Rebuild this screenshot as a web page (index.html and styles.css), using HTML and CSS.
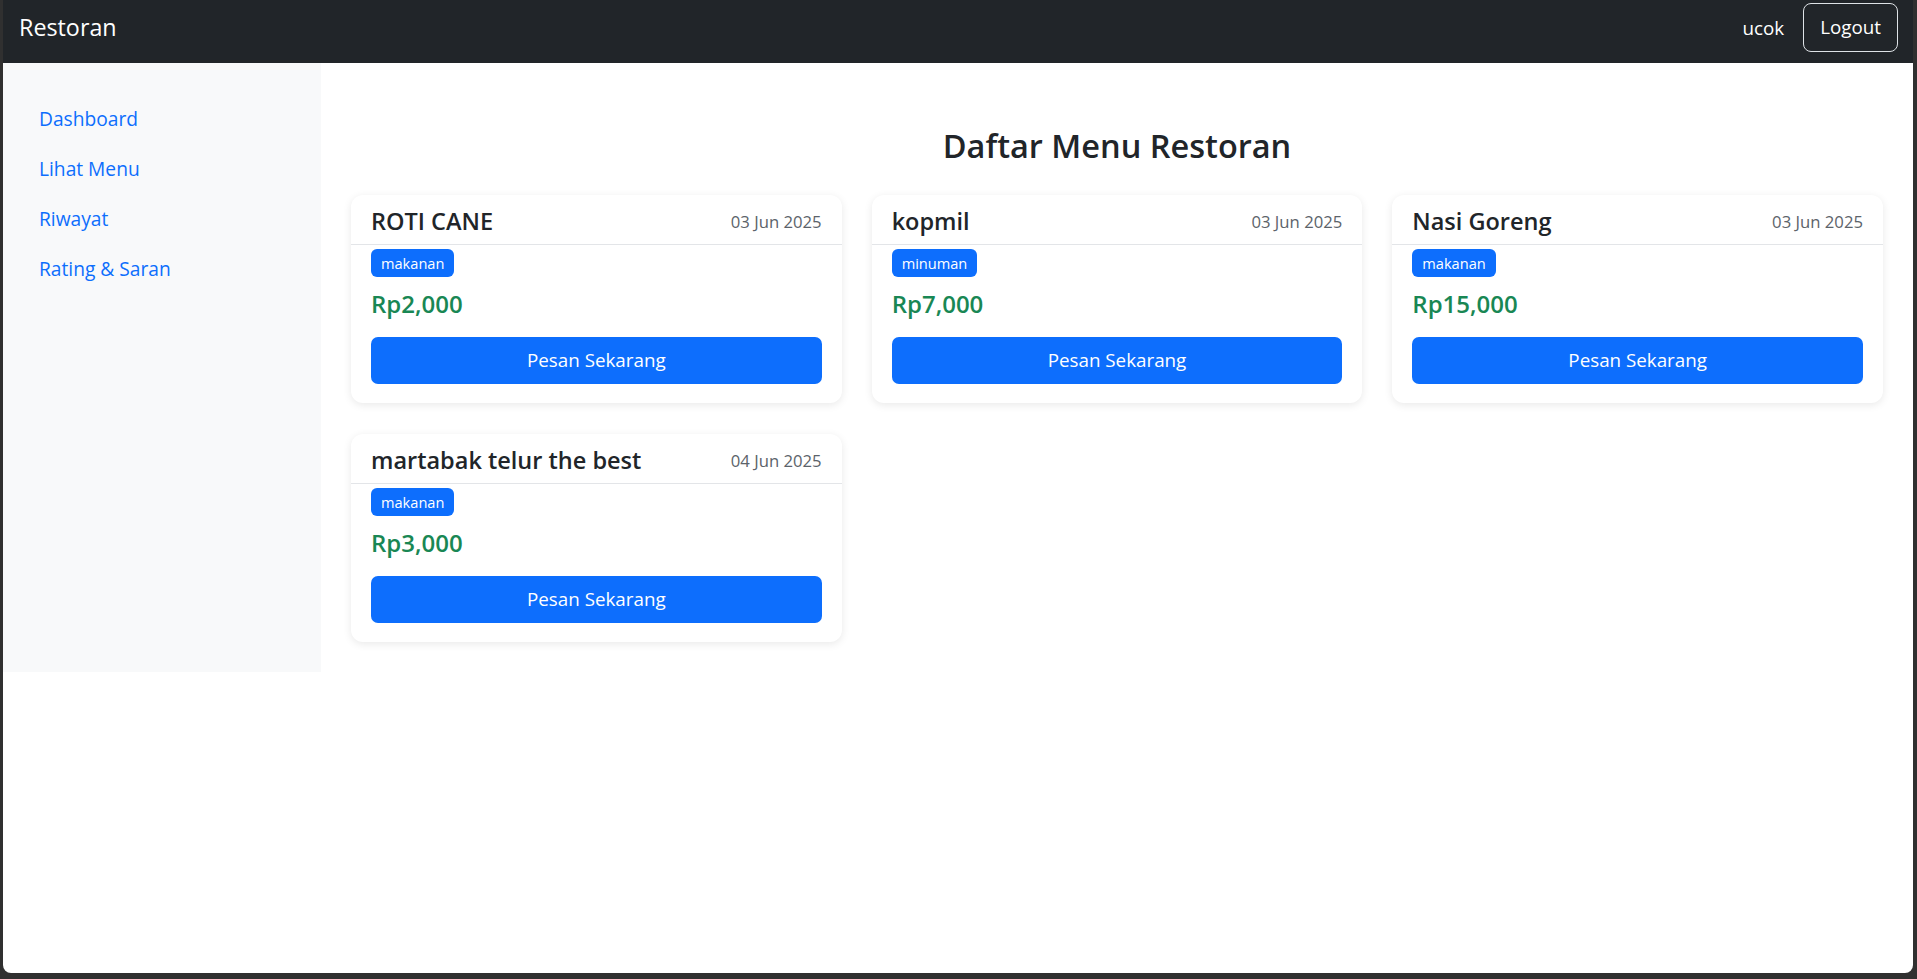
FILE: index.html
```html
<!DOCTYPE html>
<html lang="id">
<head>
<meta charset="utf-8">
<title>Restoran</title>
<link rel="stylesheet" href="styles.css">
</head>
<body>
<div class="window">
  <nav class="navbar">
    <a class="brand" href="#">Restoran</a>
    <div class="nav-right">
      <span class="user">ucok</span>
      <a class="btn-logout" href="#">Logout</a>
    </div>
  </nav>
  <div class="layout">
    <aside class="sidebar">
      <a class="side-link" href="#">Dashboard</a>
      <a class="side-link" href="#">Lihat Menu</a>
      <a class="side-link" href="#">Riwayat</a>
      <a class="side-link" href="#">Rating &amp; Saran</a>
    </aside>
    <main class="main">
      <h3 class="page-title">Daftar Menu Restoran</h3>
      <div class="grid">
        <div class="card">
          <div class="card-header"><h5 class="card-title">ROTI CANE</h5><span class="date">03 Jun 2025</span></div>
          <div class="card-body">
            <span class="badge">makanan</span>
            <h5 class="price">Rp2,000</h5>
            <a class="btn-order" href="#">Pesan Sekarang</a>
          </div>
        </div>
        <div class="card">
          <div class="card-header"><h5 class="card-title">kopmil</h5><span class="date">03 Jun 2025</span></div>
          <div class="card-body">
            <span class="badge">minuman</span>
            <h5 class="price">Rp7,000</h5>
            <a class="btn-order" href="#">Pesan Sekarang</a>
          </div>
        </div>
        <div class="card">
          <div class="card-header"><h5 class="card-title">Nasi Goreng</h5><span class="date">03 Jun 2025</span></div>
          <div class="card-body">
            <span class="badge">makanan</span>
            <h5 class="price">Rp15,000</h5>
            <a class="btn-order" href="#">Pesan Sekarang</a>
          </div>
        </div>
        <div class="card">
          <div class="card-header"><h5 class="card-title">martabak telur the best</h5><span class="date">04 Jun 2025</span></div>
          <div class="card-body">
            <span class="badge">makanan</span>
            <h5 class="price">Rp3,000</h5>
            <a class="btn-order" href="#">Pesan Sekarang</a>
          </div>
        </div>
      </div>
    </main>
  </div>
</div>
</body>
</html>
```

FILE: styles.css
```css
* { box-sizing: border-box; }
html, body { margin: 0; padding: 0; }
body {
  background: #303030;
  font-family: "Open Sans", "Noto Sans", sans-serif;
  font-size: 18.6px;
  color: #212529;
  height: 979px;
  overflow: hidden;
}
a { text-decoration: none; }
.window {
  margin: 0 4px 0 3px;
  height: 973px;
  background: #fff;
  border-radius: 0 0 8px 8px;
  overflow: hidden;
}
.navbar {
  height: 63px;
  background: #212529;
  display: flex;
  justify-content: space-between;
  align-items: flex-start;
  padding: 3px 15px 0 16px;
}
.brand {
  color: #fff;
  font-size: 23.3px;
  line-height: 49px;
}
.nav-right {
  display: flex;
  align-items: center;
  gap: 19px;
  height: 49px;
}
.user { color: #fff; font-size: 18.8px; }
.btn-logout {
  color: #fff;
  border: 1px solid #dee2e6;
  border-radius: 8px;
  height: 49px;
  line-height: 47px;
  padding: 0 16px;
  font-size: 18.8px;
}
.layout {
  display: flex;
  align-items: stretch;
}
.sidebar {
  width: 318px;
  flex: none;
  background: #f8f9fa;
  padding: 31px 0 0 36px;
  display: flex;
  flex-direction: column;
}
.side-link {
  color: #0d6efd;
  height: 50px;
  line-height: 50px;
  font-size: 19.2px;
}
.main {
  flex: 1;
  padding: 30px 30px 30px 30px;
}
.page-title {
  margin: 33px 0 30px;
  text-align: center;
  font-size: 32.5px;
  font-weight: 600;
  line-height: 39px;
}
.grid {
  display: grid;
  grid-template-columns: repeat(3, 1fr);
  column-gap: 30px;
  row-gap: 31px;
}
.card {
  background: #fff;
  border-radius: 12px;
  box-shadow: 0 2px 8px rgba(0,0,0,0.09);
  height: 208px;
  overflow: hidden;
}
.card-header {
  display: flex;
  justify-content: space-between;
  align-items: center;
  padding: 12px 20px 9px 20px;
  border-bottom: 1px solid #e3e5e8;
}
.card-title {
  margin: 0;
  font-size: 23.5px;
  font-weight: 600;
  line-height: 28px;
}
.date {
  color: #5c636a;
  font-size: 16.7px;
}
.card-body {
  padding: 4px 20px 19px;
  display: flex;
  flex-direction: column;
  align-items: flex-start;
}
.badge {
  background: #0d6efd;
  color: #fff;
  font-size: 14.6px;
  font-weight: 500;
  height: 28px;
  line-height: 28px;
  padding: 0 10px;
  border-radius: 6px;
}
.price {
  margin: 13px 0 19px;
  color: #198754;
  font-size: 24px;
  font-weight: 600;
  line-height: 28px;
}
.btn-order {
  align-self: stretch;
  background: #0d6efd;
  color: #fff;
  height: 47px;
  line-height: 47px;
  text-align: center;
  border-radius: 7px;
  font-size: 18.8px;
}
```
